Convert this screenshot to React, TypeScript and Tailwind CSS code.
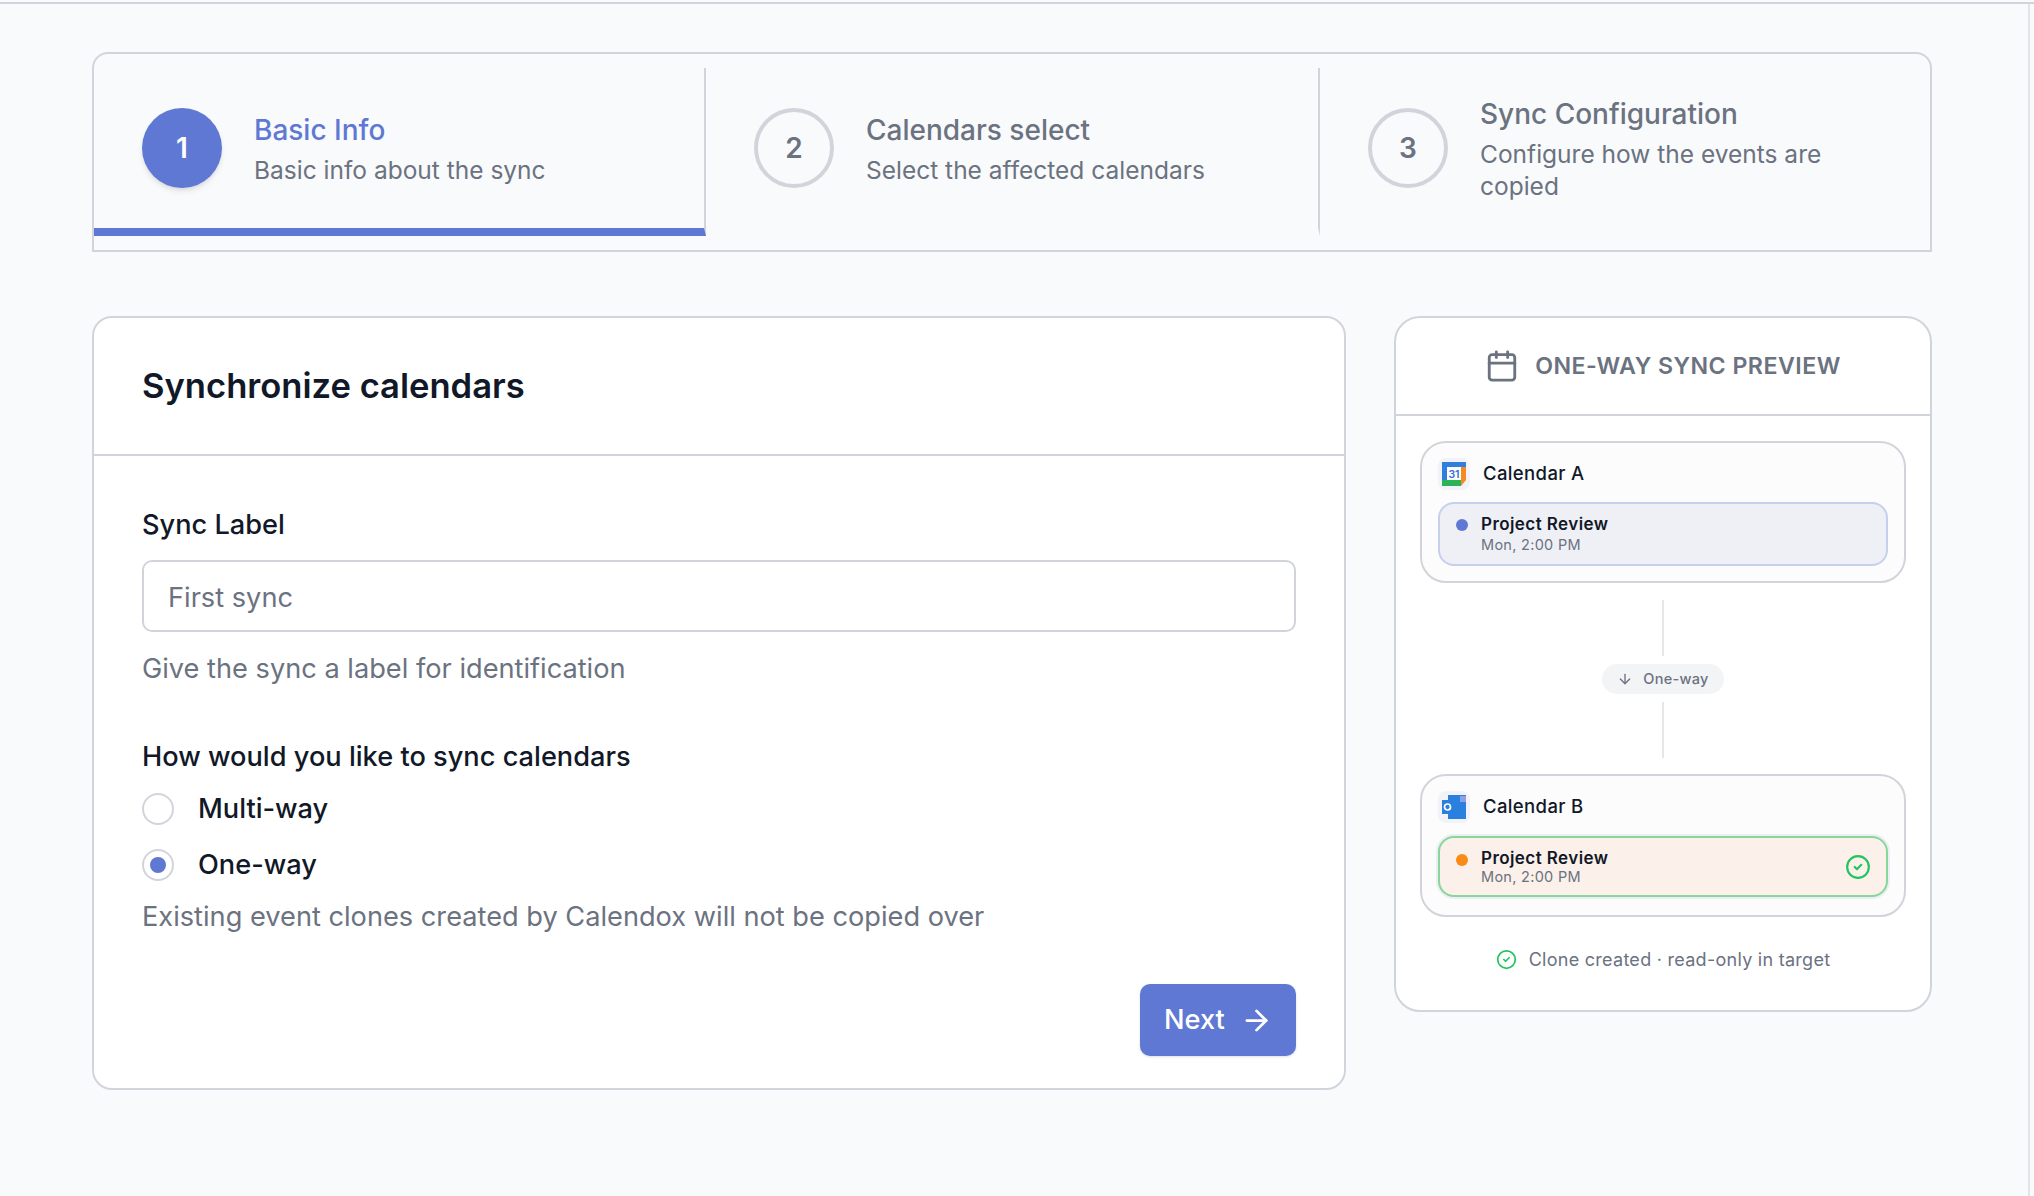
import { ArrowDown, ArrowRight, Calendar, CircleCheck } from 'lucide-react';

const steps = [
  { n: 1, title: 'Basic Info', sub: 'Basic info about the sync', active: true, width: 'w-[612px] border-r-2' },
  { n: 2, title: 'Calendars select', sub: 'Select the affected calendars', active: false, width: 'w-[614px] border-r-2' },
  { n: 3, title: 'Sync Configuration', sub: 'Configure how the events are copied', active: false, width: 'w-[610px]' },
];

function GoogleIcon() {
  return (
    <svg viewBox="0 0 24 24" className="h-6 w-6">
      <path d="M0 0h24v5H19v13H0z" fill="#2f7fdc" />
      <path d="M19 5h5v13l-5 6z" fill="#f6891f" />
      <path d="M0 18h19v6H0z" fill="#2bb35a" />
      <rect x="5" y="5" width="14" height="13" fill="#fff" />
      <text x="12" y="15.5" textAnchor="middle" fontSize="10.5" fontWeight="600" fill="#2f6fd0" fontFamily="Inter, sans-serif">31</text>
    </svg>
  );
}

function OutlookIcon() {
  return (
    <svg viewBox="0 0 24 24" className="h-6 w-6">
      <path d="M6 0h18v24H6z" fill="#2a80de" />
      <path d="M18 1h6v6h-6z" fill="#8f9fe0" />
      <path d="M0 5h11v14H0z" fill="#2a80de" />
      <circle cx="5.5" cy="12" r="3" fill="none" stroke="#fff" strokeWidth="1.7" />
    </svg>
  );
}

function CalendarCard({ name, icon, children }: { name: string; icon: React.ReactNode; children: React.ReactNode }) {
  return (
    <div className="rounded-[26px] border-2 border-[#d1d5db] bg-[#fcfcfd] px-4 py-[15px]">
      <div className="flex items-center gap-[13px]">
        <div className="flex h-8 w-8 items-center justify-center rounded-lg bg-[#f1f3f8]">{icon}</div>
        <span className="text-[18.5px] font-medium tracking-[0.02em] text-[#111827]">{name}</span>
      </div>
      {children}
    </div>
  );
}

export default function App() {
  return (
    <div className="h-[1196px] overflow-hidden bg-[#f9fafb] pt-[2px] font-['Inter',sans-serif]">
      <div className="border-t-2 border-[#d1d5db]">
        <div className="h-[1192px] w-[2030px] border-r-2 border-[#e2e4e9] pt-12 pl-[92px]">
          <div className="flex w-[1840px] rounded-t-2xl border-2 border-[#d1d5db] py-[14px]">
            {steps.map((s) => (
              <div
                key={s.n}
                className={`flex h-[168px] items-center gap-8 border-r-[#d1d5db] pr-12 pl-12 ${s.width} ${s.active ? 'border-b-8 border-b-[#5f78d3]' : 'border-b-8 border-b-transparent'}`}
              >
                <div
                  className={`flex h-20 w-20 shrink-0 items-center justify-center rounded-full text-[28px] font-semibold ${s.active ? 'bg-[#5f78d3] text-white shadow-md' : 'border-4 border-[#d1d5db] text-[#6b7280]'}`}
                >
                  {s.n}
                </div>
                <div>
                  <div className={`text-[28px] leading-[40px] font-medium ${s.active ? 'text-[#5f78d3]' : 'text-[#6b7280]'}`}>{s.title}</div>
                  <div className="mt-1 text-[24.5px] leading-[32px] text-[#6b7280]">{s.sub}</div>
                </div>
              </div>
            ))}
          </div>

          <div className="mt-16 flex items-start gap-12">
            <div className="h-[774px] w-[1254px] rounded-[20px] border-2 border-[#d1d5db] bg-white">
              <div className="flex h-[138px] items-center border-b-2 border-[#d1d5db] px-12">
                <h2 className="text-[34.6px] font-semibold text-[#111827]">Synchronize calendars</h2>
              </div>
              <div className="px-12 pt-[49px]">
                <div className="text-[27.2px] leading-[40px] font-medium text-[#111827]">Sync Label</div>
                <div className="mt-[15px] flex h-[72px] w-[1154px] items-center rounded-[10px] border-2 border-[#d1d5db] px-6 pt-1 text-[27.2px] text-[#6b7280]">
                  First sync
                </div>
                <p className="mt-[17px] text-[27.2px] leading-[40px] text-[#6b7280]">Give the sync a label for identification</p>
                <div className="mt-12 text-[27.2px] leading-[40px] font-medium text-[#111827]">How would you like to sync calendars</div>
                <div className="mt-3 flex items-center gap-6">
                  <div className="h-8 w-8 rounded-full border-2 border-[#d1d5db] bg-white" />
                  <span className="text-[27.2px] leading-[40px] font-medium text-[#111827]">Multi-way</span>
                </div>
                <div className="mt-4 flex items-center gap-6">
                  <div className="flex h-8 w-8 items-center justify-center rounded-full border-2 border-[#d1d5db] bg-white">
                    <div className="h-4 w-4 rounded-full bg-[#5f78d3]" />
                  </div>
                  <span className="text-[27.2px] leading-[40px] font-medium text-[#111827]">One-way</span>
                </div>
                <p className="mt-3 text-[27.2px] leading-[40px] text-[#6b7280]">Existing event clones created by Calendox will not be copied over</p>
                <div className="mt-[47px] flex justify-end">
                  <button className="flex h-[72px] w-[156px] items-center gap-[15px] rounded-[10px] bg-[#5f78d3] pl-6 text-[27.2px] font-medium text-white shadow-sm">
                    Next
                    <ArrowRight size={33} />
                  </button>
                </div>
              </div>
            </div>

            <div className="h-[696px] w-[538px] rounded-[26px] border-2 border-[#d1d5db] bg-white">
              <div className="flex h-[98px] items-center justify-center gap-[16px] border-b-2 border-[#d1d5db] text-[#6b7280]">
                <Calendar size={34} />
                <span className="text-[23.2px] font-semibold tracking-[0.02em]">ONE-WAY SYNC PREVIEW</span>
              </div>
              <div className="px-6 pt-[25px]">
                <CalendarCard name="Calendar A" icon={<GoogleIcon />}>
                  <div className="mt-3 flex h-[64px] gap-[13px] rounded-2xl border-2 border-[#c5d0ec] bg-[#eff0f6] pt-2 pl-4">
                    <div className="mt-[7px] h-3 w-3 shrink-0 rounded-full bg-[#5f78d3]" />
                    <div>
                      <div className="text-[17px] leading-6 font-semibold tracking-[0.025em] text-[#111827]">Project Review</div>
                      <div className="text-[14.5px] leading-[18px] tracking-[0.02em] text-[#6b7280]">Mon, 2:00 PM</div>
                    </div>
                  </div>
                </CalendarCard>

                <div className="flex flex-col items-center pt-[17px]">
                  <div className="h-14 w-[2px] bg-[#e5e7eb]" />
                  <div className="my-2 flex h-[30px] w-[122px] items-center justify-center gap-[10px] rounded-full bg-[#f3f4f6] text-[14.5px] font-medium tracking-[0.02em] text-[#6b7280]">
                    <ArrowDown size={16} />
                    One-way
                  </div>
                  <div className="h-14 w-[2px] bg-[#e5e7eb]" />
                </div>

                <div className="mt-4">
                  <CalendarCard name="Calendar B" icon={<OutlookIcon />}>
                    <div className="mt-[13px] mb-[3px] flex h-[61px] items-center justify-between rounded-2xl border-2 border-[#86d79a] bg-[#fbf0ea] pr-[15px] pl-4 ring-2 ring-[#eceef3]">
                      <div className="flex gap-[13px]">
                        <div className="mt-[6px] h-3 w-3 shrink-0 rounded-full bg-[#f98b16]" />
                        <div>
                          <div className="text-[17px] leading-5 font-semibold tracking-[0.025em] text-[#111827]">Project Review</div>
                          <div className="text-[14.5px] leading-[18px] tracking-[0.02em] text-[#6b7280]">Mon, 2:00 PM</div>
                        </div>
                      </div>
                      <CircleCheck size={26} className="text-[#22c55e]" />
                    </div>
                  </CalendarCard>
                </div>

                <div className="mt-[29px] flex items-center justify-center gap-[12px] text-[18px] tracking-[0.015em] text-[#6b7280]">
                  <CircleCheck size={21} className="text-[#22c55e]" />
                  Clone created · read-only in target
                </div>
              </div>
            </div>
          </div>
        </div>
      </div>
    </div>
  );
}
